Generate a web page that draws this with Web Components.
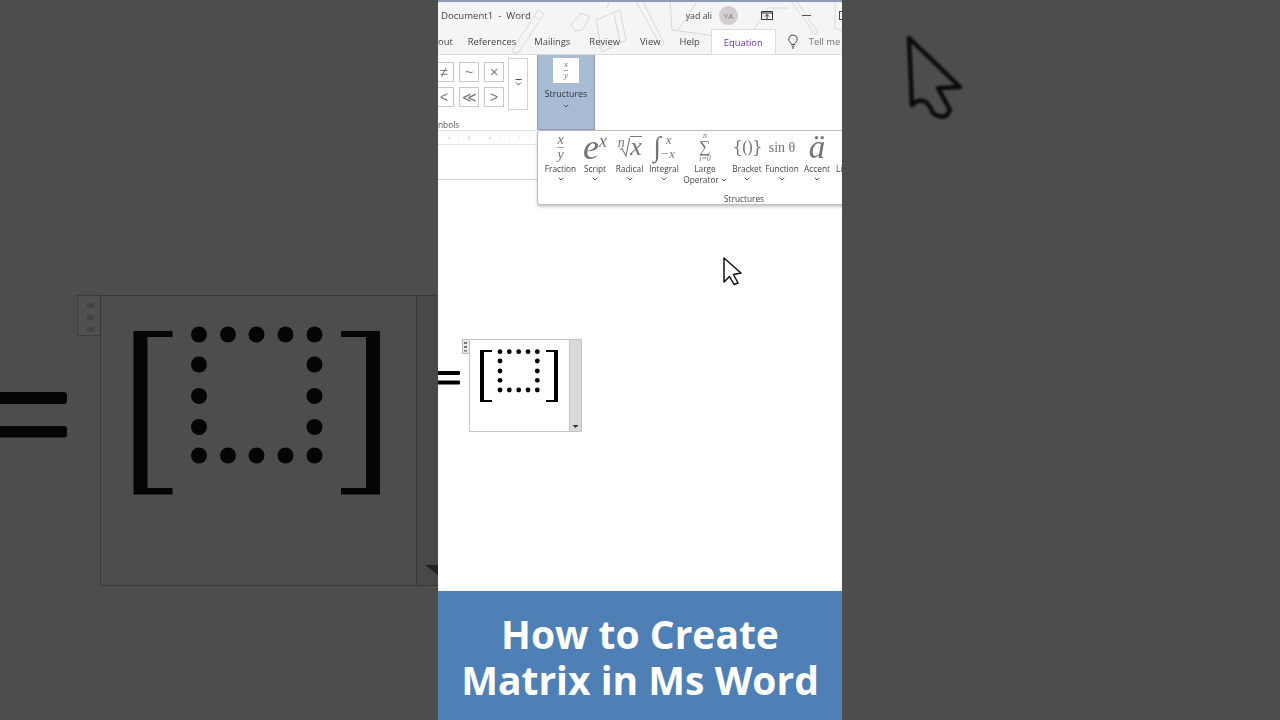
<!DOCTYPE html>
<html lang="en"><head><meta charset="utf-8"><title>How to Create Matrix in Ms Word</title>
<style>
html,body{margin:0;padding:0;background:#4d4d4d}
body{width:1280px;height:720px;overflow:hidden;font-family:"Open Sans","Liberation Sans",sans-serif}
</style></head><body>
<x-stage>
  <x-side-left slot="left"></x-side-left>
  <x-word slot="center"></x-word>
  <x-side-right slot="right"></x-side-right>
</x-stage>
<script>
const CHEV='<svg width="6" height="4" viewBox="0 0 6 4" style="display:block"><path d="M.7.7 3 3 5.300.7" fill="none" stroke="#555" stroke-width="1"/></svg>';
function def(name,html){customElements.define(name,class extends HTMLElement{constructor(){super();this.attachShadow({mode:'open'}).innerHTML=html}})}

def('x-stage',`<style>:host{display:flex;width:1280px;height:720px;overflow:hidden}
::slotted([slot=left]),::slotted([slot=right]){flex:0 0 438px}::slotted([slot=center]){flex:0 0 404px}</style>
<slot name="left"></slot><slot name="center"></slot><slot name="right"></slot>`);

const dots=(xs,ys,r,f)=>{let s='';ys.forEach((y,j)=>xs.forEach((x,i)=>{if(j==0||j==ys.length-1||i==0||i==xs.length-1)s+=`<circle cx="${x}" cy="${y}" r="${r}" fill="${f}"/>`}));return s};

def('x-side-left',`<style>:host{display:block;height:720px;background:#4d4d4d}svg{display:block;filter:blur(.7px)}</style>
<svg width="438" height="720" viewBox="0 0 438 720">
<rect x="77.500" y="295.500" width="23" height="40" fill="#505050" stroke="#3c3c3c"/>
<g fill="#434343"><rect x="87" y="303" width="7" height="5"/><rect x="87" y="315" width="7" height="5"/><rect x="87" y="327" width="7" height="5"/></g>
<rect x="100.500" y="295.500" width="340" height="290" fill="#4d4d4d" stroke="#383838"/>
<rect x="417" y="296" width="22" height="289" fill="#484848"/>
<path d="M416.500 296V586" stroke="#383838"/>
<path d="M425 565h13v10z" fill="#222"/>
<g fill="#050505">
<rect x="-4" y="392" width="71" height="12" rx="3"/><rect x="-4" y="426" width="71" height="11.500" rx="3"/>
<path d="M133.500 331H172.500V337H147.500V488H172.500V494.500H133.500Z"/>
<path d="M380 331H341V337H366V488H341V494.500H380Z"/>
${dots([199,228,256.500,285.500,314.500],[334.500,364.500,396,427,455.500],8,'#050505')}
</g></svg>`);

def('x-side-right',`<style>:host{display:block;height:720px;background:#4d4d4d}svg{display:block;filter:blur(1px)}</style>
<svg width="438" height="720" viewBox="0 0 438 720"><path d="M67 38 118 87 96 88 108 110 Q104 119 97 116 Q93 115 91 113 83 93 70 105Z" fill="#4d4d4d" stroke="#0c0c0c" stroke-width="4.500" stroke-linejoin="round"/></svg>`);

def('x-tabs',`<style>:host{display:flex;height:25px;align-items:stretch;font-size:9.400px;color:#444;position:relative}
span{display:flex;align-items:center;margin-right:18px;white-space:nowrap}
.out{margin-right:15px}.m{margin-right:19px}.r{margin-right:20px}.v{margin-right:19px}
.eq{margin:0;margin-left:-7px;width:65px;box-sizing:border-box;justify-content:center;background:#fff;border:1px solid #dcdcdc;border-bottom:0;color:#7030a0;height:26px}
.bulb{margin:0 10px 0 11px}.tell{margin:0;color:#777}
svg{display:block}
</style><span class="out">out</span><span>References</span><span class="m">Mailings</span><span class="r">Review</span><span class="v">View</span><span>Help</span><span class="eq">Equation</span>
<span class="bulb"><svg width="12" height="15" viewBox="0 0 12 15"><path d="M6 1a4.200 4.200 0 0 0-2.500 7.600c.5.400.8 1 .8 1.900h3.400c0-.9.300-1.500.8-1.900A4.200 4.200 0 0 0 6 1ZM4.600 12.200h2.800M5 14h2" fill="none" stroke="#444"/></svg></span><span class="tell">Tell me</span>`);

def('x-titlebar',`<style>:host{display:flex;height:27px;align-items:center;font-size:8.800px;color:#444}
.doc{margin-left:3px;font-size:9.600px;white-space:pre}
.sp{flex:1}
.av{width:19px;height:19px;border-radius:50%;background:#d2ced2;color:#807c80;font-size:8px;display:flex;align-items:center;justify-content:center;margin:0 23px 0 7px;flex:none}
svg{display:block;flex:none}
.min{width:9px;height:1px;background:#555;margin:0 28px 0 29px;flex:none}
.max{width:8px;height:9px;border:1px solid #444;flex:none;margin-right:-5px;box-sizing:border-box}
</style><span class="doc">Document1  -  Word</span><span class="sp"></span><span>yad ali</span><span class="av">YA</span>
<svg width="12" height="10" viewBox="0 0 12 10"><path d="M.5.500h11v8H.500zM.5 2h11M6 8V3.500M4 5.500l2-2 2 2" fill="none" stroke="#333"/></svg>
<span class="min"></span><span class="max"></span>`);

def('x-sym',`<style>:host{display:flex;width:20px;height:20px;box-sizing:border-box;border:1px solid #c8c8c8;align-items:center;justify-content:center;font:14px "Liberation Sans",sans-serif;color:#777;background:#fff}</style><slot></slot>`);

def('x-tool',`<style>:host{display:flex;flex-direction:column;align-items:center;font-size:8.300px;line-height:11px;color:#444;text-align:center;flex:none;white-space:nowrap}
:host([nochev]) .c{display:none}
.ic{height:32px;display:flex;align-items:center;justify-content:center;color:#737373;font-family:"Liberation Serif",serif}
.c{display:flex;justify-content:center;margin-top:3px}
</style><div class="ic"><slot name="icon"></slot></div><div><slot></slot></div><div class="c">${CHEV}</div>`);

def('x-frac',`<style>:host{display:inline-flex;flex-direction:column;align-items:center;font:italic var(--s,14px)/.85 "Liberation Serif",serif;color:#737373}
i{display:block;width:110%;height:1px;background:#aaa;margin:1px 0 1px}</style><span>x</span><i></i><span>y</span>`);

def('x-popup',`<style>:host{display:flex;flex-direction:column;position:absolute;left:99px;top:130px;width:320px;height:75px;box-sizing:border-box;background:#fff;border:1px solid #bcbcbc;border-radius:3px;box-shadow:0 2px 3px rgba(0,0,0,.22);overflow:hidden;filter:blur(.25px)}
.row{display:flex;height:62px;padding-left:5px}
.ft{font-size:8.300px;color:#444;padding-left:186px;line-height:11px;height:11px;white-space:nowrap}
.big{font:italic 36px/30px "Liberation Serif",serif}
.sup{font:italic 18px/1 "Liberation Serif",serif;align-self:flex-start}
.flex{display:flex;align-items:center}
.sum{display:flex;flex-direction:column;align-items:center;font:italic 8px/8px "Liberation Serif",serif}
.sum b{font:400 16px/13px "Liberation Serif",serif}
.sum .i{margin-top:2px}
.lim{display:flex;flex-direction:column;justify-content:space-between;height:27px;font:italic 12.500px/13px "Liberation Serif",serif}
.inl{display:inline-block;vertical-align:1px;margin-left:2px}
</style><div class="row">
<x-tool style="width:35px"><x-frac slot="icon"></x-frac>Fraction</x-tool>
<x-tool style="width:34px"><span slot="icon" class="flex"><span class="big">e</span><span class="sup">x</span></span>Script</x-tool>
<x-tool style="width:35px"><span slot="icon" class="flex"><span class="sup" style="font-size:14px;width:8px">n</span><svg width="10" height="22" viewBox="0 0 10 22" style="margin-left:-5px"><path d="M0 13.500 2 12.500 6 20 9.500 2.500H10" fill="none" stroke="#777" stroke-width="1.100"/></svg><span style="display:flex;flex-direction:column;align-items:stretch"><i style="display:block;height:1px;background:#777;margin-bottom:-2px"></i><span class="big" style="font-size:26px;line-height:24px">x</span></span></span>Radical</x-tool>
<x-tool style="width:34px"><span slot="icon" class="flex"><span style="font-size:28px;line-height:1">∫</span><span class="lim"><span style="margin-left:2px">x</span><span>−x</span></span></span>Integral</x-tool>
<x-tool style="width:48px" nochev=""><span slot="icon" class="sum"><span>n</span><b>∑</b><span class="i">i=0</span></span>Large<br><span style="white-space:nowrap">Operator<span class="inl">${CHEV}</span></span></x-tool>
<x-tool style="width:36px"><span slot="icon" style="font:16px 'DejaVu Serif',serif;letter-spacing:-1px">{()}</span>Bracket</x-tool>
<x-tool style="width:34px"><span slot="icon" style="font-size:14px">sin θ</span>Function</x-tool>
<x-tool style="width:36px"><span slot="icon" class="big" style="font-size:33px">ä</span>Accent</x-tool>
<x-tool style="width:36px;align-items:flex-start;padding-left:1px" nochev=""><span slot="icon"></span>Li</x-tool>
</div><div class="ft">Structures</div>`);

def('x-ribbon',`<style>:host{display:flex;height:76px;background:#fff;border-top:1px solid #dcdcdc;box-sizing:border-box;font-size:8.300px;color:#444}
.sy{display:flex;flex-direction:column;width:99px;flex:none;overflow:hidden}
.gr{display:grid;grid-template-columns:repeat(3,20px);grid-auto-rows:20px;column-gap:5px;row-gap:5px;margin:7px 0 0 -4px;width:70px;flex:none}
.top{display:flex}
.more{width:20px;height:52px;box-sizing:border-box;border:1px solid #d0d0d0;margin:3px 0 0 4px;display:flex;align-items:center;justify-content:center;padding-bottom:3px;flex:none}
.lb{margin-top:9px;line-height:12px;color:#555}
.st{width:58px;flex:none;box-sizing:border-box;background:#a9bcd6;border:1px solid #8d9db8;border-width:0 1px 1px;display:flex;flex-direction:column;align-items:center;color:#333;font-size:8.800px;height:75px}
.wh{width:26px;height:25px;background:#fff;margin-top:3px;display:flex;align-items:center;justify-content:center;--s:9px}
.nm{margin-top:5px;line-height:12px}.ch{margin-top:4px}
</style>
<div class="sy"><div class="top"><div class="gr"><x-sym>≠</x-sym><x-sym>~</x-sym><x-sym>×</x-sym><x-sym>&lt;</x-sym><x-sym>≪</x-sym><x-sym>&gt;</x-sym></div>
<div class="more"><svg width="7" height="7" viewBox="0 0 7 7"><path d="M.5.500h6M1 3.500 3.500 6 6 3.500" fill="none" stroke="#555"/></svg></div></div>
<div class="lb">nbols</div></div>
<div class="st"><div class="wh"><x-frac></x-frac></div><div class="nm">Structures</div><div class="ch">${CHEV}</div></div>`);

def('x-ruler',`<style>:host{display:block;height:15px;background:#fff;border-top:1px solid #e0e0e0;border-bottom:1px solid #e4e4e4;width:99px;box-sizing:border-box}
svg{display:block}</style><svg width="99" height="13"><path d="M10 7h2M20 7h1M31 5v4M51 7h2M61 7h1M71 7h1M81 7h1M91 7h1" stroke="#c4c4c4"/></svg>`);

def('x-matrix',`<style>:host{display:block;width:143px;height:93px}svg{display:block;filter:blur(.3px)}</style>
<svg width="143" height="94" viewBox="0 0 143 94" overflow="visible">
<rect x="24.500" y=".5" width="7" height="14" fill="#e8e8e8" stroke="#bdbdbd"/>
<g fill="#777"><rect x="26" y="3" width="3" height="2"/><rect x="26" y="7" width="3" height="2"/><rect x="26" y="11" width="3" height="1.500"/></g>
<rect x="31.500" y=".5" width="112" height="92" fill="#fff" stroke="#c4c4c4"/>
<rect x="132" y="1" width="11" height="91" fill="#d9d9d9"/><path d="M131.500 1V92" stroke="#c4c4c4"/>
<path d="M134.500 86h6l-3 3z" fill="#333"/>
<g fill="#000"><rect x="-2" y="32" width="24" height="4" rx="1"/><rect x="-2" y="41.500" width="24" height="4" rx="1"/>
<path d="M42 11H54V13H46V61H54V63H42Z"/><path d="M120 11H108V13H116V61H108V63H120Z"/>
${dots([62,71.300,80.700,90,99.300],[12.700,22,32,41.300,51],2.400,'#000')}</g></svg>`);

def('x-banner',`<style>:host{display:flex;flex-direction:column;align-items:center;justify-content:center;height:129px;background:#4e80b5;color:#fff;font:700 39px/46px "Open Sans","Liberation Sans",sans-serif;text-align:center;white-space:nowrap;padding-top:3px;box-sizing:border-box}</style><slot></slot>`);

def('x-word',`<style>:host{display:flex;flex-direction:column;position:relative;height:720px;width:404px;overflow:hidden;background:#fff}
.head{height:54px;background:#f5f5f5;border-top:2px solid #8b9cb6;box-sizing:border-box;position:relative;overflow:hidden;filter:blur(.3px)}
.dood{position:absolute;left:0;top:-2px}
.head x-titlebar,.head x-tabs{position:relative}
x-ribbon{filter:blur(.25px)}
.doc{flex:1;display:flex;flex-direction:column;min-height:0}
.mw{margin-top:159px}
.ruleline{width:99px;height:35px;border-bottom:1px solid #d0d0d0;box-sizing:border-box}
x-banner{flex:none}
.cur{position:absolute;left:284px;top:256px}
</style>
<div class="head">
<svg class="dood" width="404" height="56" fill="none" stroke="#d8d8d8"><path d="M100 10 74 50 76 54 81 52 106 14ZM96 16l6 4M133 25l10-12 9 4-8 13-7 1ZM158 20l24-10 6 30-24 12ZM176 14l6 28M172 0l-3 8M197 0l26 46 3-3L204 0M232 0l2 30 44 6M260 0 240 30M312 36 330 8h20M352 0l25 34 3-2L358 0M397 0v28l7 3"/></svg>
<x-titlebar></x-titlebar><x-tabs></x-tabs></div>
<x-ribbon></x-ribbon>
<div class="doc"><x-ruler></x-ruler><div class="ruleline"></div>
<div class="mw"><x-matrix></x-matrix></div></div>
<x-banner>How to Create<br>Matrix in Ms Word</x-banner>
<x-popup></x-popup>
<svg class="cur" width="22" height="30" viewBox="0 0 22 30"><path d="M2 2 19 17 11.500 18.500 16 27 12 28.500 7.500 20.500 2 26Z" fill="#fff" stroke="#111" stroke-width="1.500" stroke-linejoin="round"/></svg>`);
</script>
</body></html>
